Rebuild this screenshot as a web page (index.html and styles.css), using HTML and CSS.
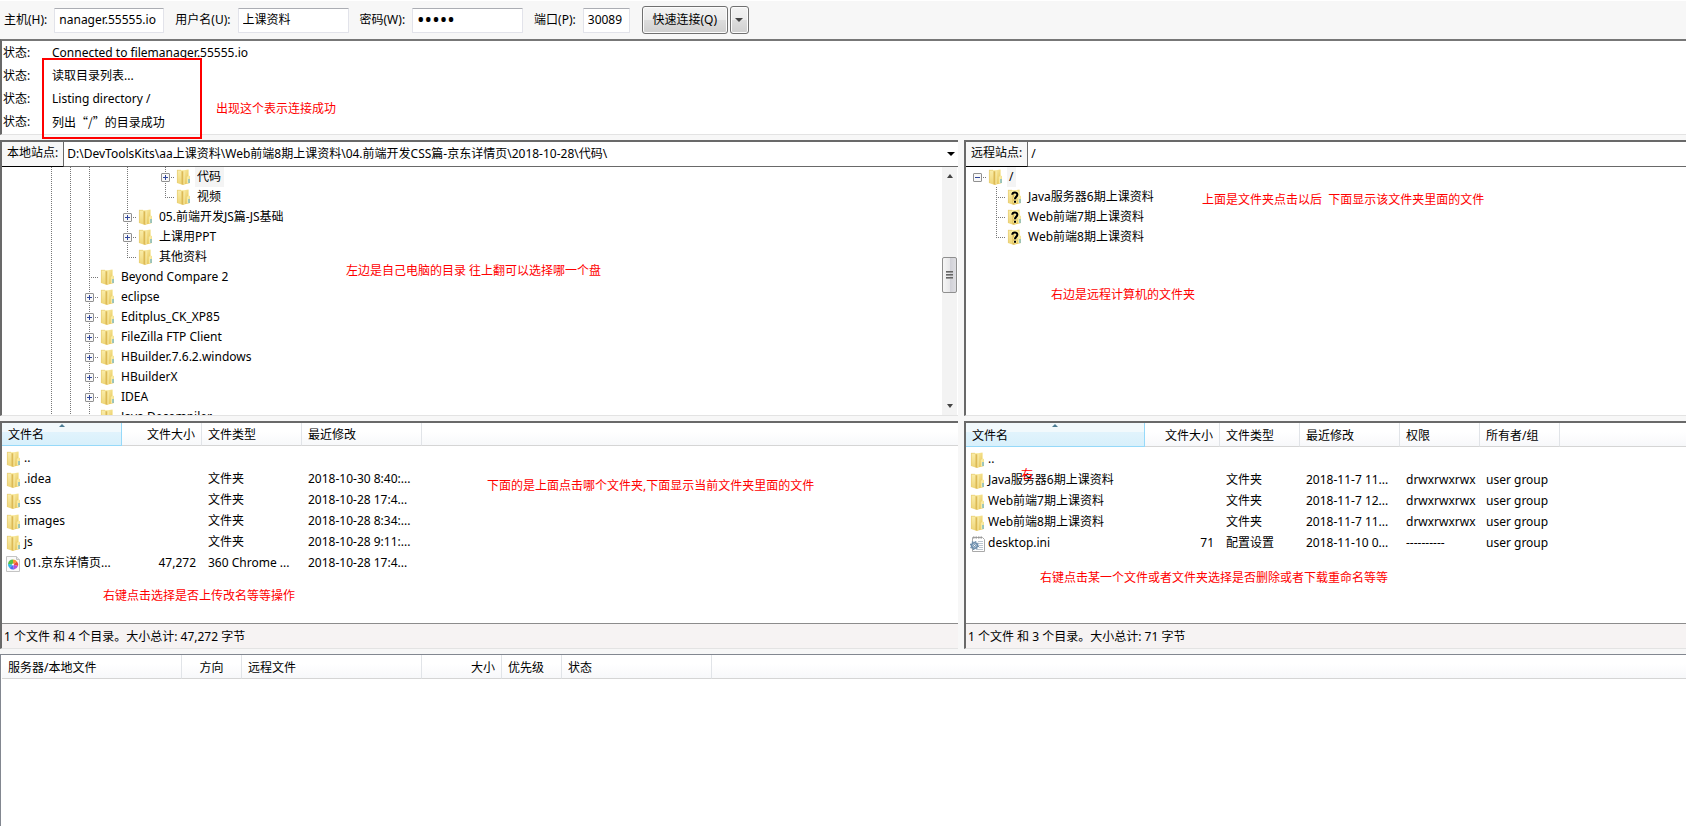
FILE: index.html
```html
<!DOCTYPE html>
<html lang="zh-CN">
<head>
<meta charset="utf-8">
<title>FileZilla</title>
<link rel="stylesheet" href="styles.css">
</head>
<body>
<svg class="defs" aria-hidden="true">
  <defs>
    <linearGradient id="gold" x1="0" x2="0" y1="0" y2="1">
      <stop offset="0" stop-color="#faedaa"/><stop offset="1" stop-color="#eed578"/>
    </linearGradient>
    <linearGradient id="gold-front" x1="0" x2="1" y1="0" y2="1">
      <stop offset="0" stop-color="#fdf2b0"/><stop offset="1" stop-color="#e0b941"/>
    </linearGradient>
    <symbol id="folder" viewBox="0 0 16 16">
      <path d="M1 1h6.500l.5.500V15.500H5.500L1 14z" fill="url(#gold)"/>
      <path d="M6 1.500 12.500.5v6L14 7.200v6.800l-6 1.500-2-.5z" fill="url(#gold-front)"/>
      <path d="M12 1v6l-1.200 1v6.500l3-.8V7.200l-1.300-.9V1z" fill="#f8eaa2"/>
      <path d="M5.500 2 7.500 2.500V16l-2-.7z" fill="#dcb955"/>
      <path d="M8 2.500V15.500" stroke="#fbf0b4" stroke-width=".8"/>
      <path d="M1.400 1.200v12.800M1 1.300h4" stroke="#e6cb72" stroke-width=".7"/>
      <path d="M13 10v4" stroke="#47a5dc"/>
    </symbol>
    <symbol id="folder-unknown" viewBox="0 0 16 16">
      <use href="#folder"/>
      <path d="M5.300 5.800C5.400 2.500 10.600 2.500 10.500 5.700 10.500 7.700 8 8 8 10.300M8 11.700v2.100" fill="none" stroke="#fff3a0" stroke-width="4"/>
      <path d="M5.300 5.800C5.400 2.700 10.400 2.700 10.300 5.700 10.300 7.700 8 8 8 10.300M8 11.700v2.100" fill="none" stroke="#000" stroke-width="2.100"/>
    </symbol>
    <symbol id="page-html" viewBox="0 0 16 16">
      <path d="M.5.500h10l3 3v12H.5z" fill="#fafafa" stroke="#c4c4c4"/>
      <path d="M10.500.5v3h3" fill="#e8e8e8" stroke="#c4c4c4"/>
      <path d="M7 8.500V3.500a5 5 0 0 1 4 2z" fill="#f39a2d"/><path d="M7 8.500 11 5.500a5 5 0 0 1 1 4.500z" fill="#e94b3c"/>
      <path d="M7 8.500 12 10a5 5 0 0 1-4 3.500z" fill="#b54fd6"/><path d="M7 8.500 8 13.500a5 5 0 0 1-4.500-1.500z" fill="#4a6ff0"/>
      <path d="M7 8.500 3.500 12A5 5 0 0 1 2 8z" fill="#29b6e8"/><path d="M7 8.500 2 8a5 5 0 0 1 5-4.500z" fill="#55c04a"/>
      <circle cx="7" cy="8.500" r="1" fill="#fff"/>
    </symbol>
    <symbol id="page-ini" viewBox="0 0 16 16">
      <path d="M2.500 1.500h10l2 2v12h-12z" fill="#fff" stroke="#a9a9a9"/>
      <path d="M3 1.500h10" stroke="#999" stroke-dasharray="1.500 1" stroke-width="2"/>
      <path d="M8 5.500h5M9 7.500h4M9 9.500h4M9 11.500h4M7 13.500h6" stroke="#bcc5cf"/>
      <circle cx="4.500" cy="9.500" r="2.800" fill="#dcebf7" stroke="#6d8dab" stroke-width="1.600"/>
      <circle cx="4.500" cy="9.500" r="4" fill="none" stroke="#6d8dab" stroke-width="1.200" stroke-dasharray="1.600 1.500"/>
      <circle cx="4.500" cy="9.500" r="1" fill="#fff" stroke="#4e6f90" stroke-width=".8"/>
    </symbol>
  </defs>
</svg>

<form class="toolbar">
  <label for="host">主机(H):</label><input class="field host" id="host" type="text" value="nanager.55555.io">
  <label for="user">用户名(U):</label><input class="field" id="user" type="text" value="上课资料">
  <label for="pass">密码(W):</label><input class="field pass" id="pass" type="password" value="12345">
  <label for="port">端口(P):</label><input class="field port" id="port" type="text" value="30089">
  <button class="btn connect" type="button">快速连接(Q)</button>
  <button class="btn more" type="button" aria-label="历史记录"><span class="arrow"></span></button>
</form>

<section class="log">
  <div class="log-row"><span>状态:</span><span>Connected to filemanager.55555.io</span></div>
  <div class="log-row"><span>状态:</span><span>读取目录列表...</span></div>
  <div class="log-row"><span>状态:</span><span>Listing directory /</span></div>
  <div class="log-row"><span>状态:</span><span class="cjk">列出“/”的目录成功</span></div>
  <div class="mark"></div>
  <p class="note n-log">出现这个表示连接成功</p>
</section>

<main class="split">
  <section class="pane site">
    <div class="address">
      <label for="local">本地站点:</label>
      <select id="local"><option>D:\DevToolsKits\aa上课资料\Web前端8期上课资料\04.前端开发CSS篇-京东详情页\2018-10-28\代码\</option></select>
      <span class="arrow black"></span>
    </div>
    <div class="tree-wrap">
      <ul class="tree local">
        <li><i class="v"></i><i class="v"></i><i class="v"></i><i></i><i class="v"></i><i></i><i class="v h box"></i><svg><use href="#folder"/></svg><span class="current">代码</span></li>
        <li><i class="v"></i><i class="v"></i><i class="v"></i><i></i><i class="v"></i><i></i><i class="v h end"></i><svg><use href="#folder"/></svg><span>视频</span></li>
        <li><i class="v"></i><i class="v"></i><i class="v"></i><i></i><i class="v h box"></i><svg><use href="#folder"/></svg><span>05.前端开发JS篇-JS基础</span></li>
        <li><i class="v"></i><i class="v"></i><i class="v"></i><i></i><i class="v h box"></i><svg><use href="#folder"/></svg><span>上课用PPT</span></li>
        <li><i class="v"></i><i class="v"></i><i class="v"></i><i></i><i class="v h end"></i><svg><use href="#folder"/></svg><span>其他资料</span></li>
        <li><i class="v"></i><i class="v"></i><i class="v h"></i><svg><use href="#folder"/></svg><span>Beyond Compare 2</span></li>
        <li><i class="v"></i><i class="v"></i><i class="v h box"></i><svg><use href="#folder"/></svg><span>eclipse</span></li>
        <li><i class="v"></i><i class="v"></i><i class="v h box"></i><svg><use href="#folder"/></svg><span>Editplus_CK_XP85</span></li>
        <li><i class="v"></i><i class="v"></i><i class="v h box"></i><svg><use href="#folder"/></svg><span>FileZilla FTP Client</span></li>
        <li><i class="v"></i><i class="v"></i><i class="v h box"></i><svg><use href="#folder"/></svg><span>HBuilder.7.6.2.windows</span></li>
        <li><i class="v"></i><i class="v"></i><i class="v h box"></i><svg><use href="#folder"/></svg><span>HBuilderX</span></li>
        <li><i class="v"></i><i class="v"></i><i class="v h box"></i><svg><use href="#folder"/></svg><span>IDEA</span></li>
        <li><i class="v"></i><i class="v"></i><i class="v h"></i><svg><use href="#folder"/></svg><span>Java Decompiler</span></li>
      </ul>
      <div class="scrollbar"><span class="arrow up"></span><span class="thumb"></span><span class="arrow"></span></div>
    </div>
    <p class="note n-local">左边是自己电脑的目录 往上翻可以选择哪一个盘</p>
  </section>

  <section class="pane site">
    <div class="address">
      <label for="remote">远程站点:</label>
      <select id="remote"><option>/</option></select>
    </div>
    <div class="tree-wrap">
      <ul class="tree">
        <li><i class="h box open"></i><svg><use href="#folder"/></svg><span class="current">/</span></li>
        <li><i></i><i class="v h"></i><svg><use href="#folder-unknown"/></svg><span>Java服务器6期上课资料</span></li>
        <li><i></i><i class="v h"></i><svg><use href="#folder-unknown"/></svg><span>Web前端7期上课资料</span></li>
        <li><i></i><i class="v h end"></i><svg><use href="#folder-unknown"/></svg><span>Web前端8期上课资料</span></li>
      </ul>
    </div>
    <p class="note n-remote-a">上面是文件夹点击以后&nbsp; 下面显示该文件夹里面的文件</p>
    <p class="note n-remote-b">右边是远程计算机的文件夹</p>
  </section>

  <section class="pane files">
    <div class="list">
      <table>
        <colgroup><col class="w120"><col class="w80"><col class="w100"><col class="w120"><col></colgroup>
        <thead><tr><th class="sorted">文件名</th><th class="num">文件大小</th><th>文件类型</th><th>最近修改</th><th></th></tr></thead>
        <tbody>
          <tr><td class="name"><svg><use href="#folder"/></svg>..</td><td></td><td></td><td></td><td></td></tr>
          <tr><td class="name"><svg><use href="#folder"/></svg>.idea</td><td></td><td>文件夹</td><td>2018-10-30 8:40:...</td><td></td></tr>
          <tr><td class="name"><svg><use href="#folder"/></svg>css</td><td></td><td>文件夹</td><td>2018-10-28 17:4...</td><td></td></tr>
          <tr><td class="name"><svg><use href="#folder"/></svg>images</td><td></td><td>文件夹</td><td>2018-10-28 8:34:...</td><td></td></tr>
          <tr><td class="name"><svg><use href="#folder"/></svg>js</td><td></td><td>文件夹</td><td>2018-10-28 9:11:...</td><td></td></tr>
          <tr><td class="name"><svg><use href="#page-html"/></svg>01.京东详情页...</td><td class="num">47,272</td><td>360 Chrome ...</td><td>2018-10-28 17:4...</td><td></td></tr>
        </tbody>
      </table>
    </div>
    <footer class="summary">1 个文件 和 4 个目录。大小总计: 47,272 字节</footer>
    <p class="note n-files-a">下面的是上面点击哪个文件夹,下面显示当前文件夹里面的文件</p>
    <p class="note n-files-b">右键点击选择是否上传改名等等操作</p>
  </section>

  <section class="pane files remote">
    <div class="list">
      <table>
        <colgroup><col class="w179"><col class="w75"><col class="w80"><col class="w100"><col class="w80"><col class="w80"><col></colgroup>
        <thead><tr><th class="sorted">文件名</th><th class="num">文件大小</th><th>文件类型</th><th>最近修改</th><th>权限</th><th>所有者/组</th><th></th></tr></thead>
        <tbody>
          <tr><td class="name"><svg><use href="#folder"/></svg>..</td><td></td><td></td><td></td><td></td><td></td><td></td></tr>
          <tr><td class="name"><svg><use href="#folder"/></svg>Java服务器6期上课资料</td><td></td><td>文件夹</td><td>2018-11-7 11...</td><td>drwxrwxrwx</td><td>user group</td><td></td></tr>
          <tr><td class="name"><svg><use href="#folder"/></svg>Web前端7期上课资料</td><td></td><td>文件夹</td><td>2018-11-7 12...</td><td>drwxrwxrwx</td><td>user group</td><td></td></tr>
          <tr><td class="name"><svg><use href="#folder"/></svg>Web前端8期上课资料</td><td></td><td>文件夹</td><td>2018-11-7 11...</td><td>drwxrwxrwx</td><td>user group</td><td></td></tr>
          <tr><td class="name"><svg><use href="#page-ini"/></svg>desktop.ini</td><td class="num">71</td><td>配置设置</td><td>2018-11-10 0...</td><td>----------</td><td>user group</td><td></td></tr>
        </tbody>
      </table>
    </div>
    <footer class="summary">1 个文件 和 3 个目录。大小总计: 71 字节</footer>
    <p class="note n-right">右</p>
    <p class="note n-files-c">右键点击某一个文件或者文件夹选择是否删除或者下载重命名等等</p>
  </section>
</main>

<section class="queue">
  <table>
    <colgroup><col class="w180"><col class="w60"><col class="w180"><col class="w80"><col class="w60"><col class="w150"><col></colgroup>
    <thead><tr><th>服务器/本地文件</th><th class="mid">方向</th><th>远程文件</th><th class="num">大小</th><th>优先级</th><th>状态</th><th></th></tr></thead>
  </table>
</section>
</body>
</html>
```

FILE: styles.css
```css
*, *::before, *::after { box-sizing: border-box; }

body {
  margin: 0;
  min-height: 100vh;
  display: flex;
  flex-direction: column;
  background: #f7f7f7;
  color: #000;
  font: 12px/20px "Noto Sans", "Noto Sans CJK SC", sans-serif;
  white-space: nowrap;
  overflow: hidden;
}

input, select, button { font: inherit; color: inherit; }
p, ul { margin: 0; padding: 0; }
.defs { position: absolute; width: 0; height: 0; }
.cjk { font-family: "Noto Sans CJK SC", sans-serif; }

.arrow {
  width: 0;
  height: 0;
  border: 4px solid transparent;
  border-top-color: #444;
  border-bottom: 0;
}
.arrow.up { border-top: 0; border-bottom: 4px solid #444; }
.arrow.black { border-top-color: #000; }

/* quick connect bar */
.toolbar {
  display: flex;
  align-items: center;
  height: 39px;
  padding: 0 4px;
  border-top: 1px solid #fff;
}
.toolbar label { margin-right: 7px; }
.field {
  width: 111px;
  height: 25px;
  margin-right: 11px;
  padding: 0 4px 2px;
  border: 1px solid #e2e3ea;
  border-top-color: #abadb3;
  border-radius: 1px;
  background: #fff;
  outline: 0;
}
.field.host { width: 110px; }
.field.pass { font-size: 20px; }
.field.port { width: 47px; margin-right: 12px; }
.btn {
  height: 28px;
  padding: 0;
  border: 1px solid #707070;
  border-radius: 3px;
  background: linear-gradient(#f3f3f3, #ebebeb 50%, #dddddd 50%, #cfcfcf);
  box-shadow: inset 0 0 0 1px #fcfcfc;
}
.connect { width: 86px; margin-right: 2px; }
.more { width: 19px; display: flex; align-items: center; justify-content: center; }

/* message log */
.log {
  position: relative;
  height: 96px;
  padding: 0 1px;
  border: solid #696969;
  border-width: 2px 0 1px 2px;
  border-top-color: #777;
  border-bottom-color: #e3e3e3;
  background: #fff;
}
.log-row { display: grid; grid-template-columns: 49px 1fr; line-height: 23px; }
.mark {
  position: absolute;
  left: 40px;
  top: 17px;
  width: 160px;
  height: 81px;
  border: 2px solid #f00;
  z-index: 1;
}
.note { position: absolute; color: #f00; }
.n-log { left: 214px; top: 58px; }

/* panes */
.split {
  display: grid;
  grid-template-columns: 958fr 722fr;
  gap: 5px 6px;
  padding: 5px 0;
}
.pane {
  position: relative;
  min-width: 0;
  border: solid #696969;
  border-width: 2px 0 1px 2px;
  border-bottom-color: #e3e3e3;
  background: #fff;
}
.address { display: flex; align-items: center; height: 25px; border-bottom: 1px solid #696969; }
.address label {
  height: 25px;
  padding: 1px 5px 0;
  margin-bottom: -1px;
  border-right: 1px solid #696969;
  border-bottom: 1px solid #000;
  background: #f7f7f7;
}
.address select {
  flex: 1;
  min-width: 0;
  height: 23px;
  padding: 0 3px;
  appearance: none;
  border: 0;
  background: #fff;
}
.address .arrow { margin-right: 3px; }

.tree-wrap { display: flex; height: 248px; overflow: hidden; }
.tree { flex: 1; padding-left: 2px; list-style: none; }
.tree.local { padding-left: 40px; }
.tree li { display: flex; align-items: center; height: 20px; }
.tree svg { width: 16px; height: 16px; margin: 0 3px 0 1px; }
.tree span { padding: 0 2px; }
.tree .current { background: #f4f4f4; padding-right: 3px; }
.tree i { position: relative; width: 19px; height: 20px; }
.tree .v {
  background: repeating-linear-gradient(#777 0 1px, transparent 1px 2px) 9px 0 / 1px 100% no-repeat;
}
.tree .v.end { background-size: 1px 11px; }
.tree .h::before {
  content: "";
  position: absolute;
  left: 9px;
  right: 0;
  top: 10px;
  height: 1px;
  background: repeating-linear-gradient(90deg, #777 0 1px, transparent 1px 2px);
}
.tree .box::after {
  content: "";
  position: absolute;
  left: 5px;
  top: 6px;
  width: 9px;
  height: 9px;
  border: 1px solid #919191;
  border-radius: 1px;
  background:
    linear-gradient(#31479b, #31479b) 1px 3px / 5px 1px no-repeat,
    linear-gradient(#31479b, #31479b) 3px 1px / 1px 5px no-repeat,
    #f8f8f8;
}
.tree .box.open::after {
  background: linear-gradient(#31479b, #31479b) 1px 3px / 5px 1px no-repeat, #f8f8f8;
}

.scrollbar {
  width: 15px;
  margin-right: 1px;
  padding: 7px 0;
  display: grid;
  grid-template-rows: auto 1fr auto;
  justify-items: center;
  background: #f3f3f3;
}
.scrollbar .arrow { border-left-width: 3px; border-right-width: 3px; }
.thumb {
  width: 15px;
  height: 36px;
  margin-top: 79px;
  border: 1px solid #8f8f8f;
  border-radius: 2px;
  background:
    repeating-linear-gradient(#666 0 1px, #999 1px 2px, transparent 2px 3px) center / 7px 8px no-repeat,
    linear-gradient(90deg, #f6f6f6, #e8e8ea 50%, #cfcfd6 50%, #dedee2);
}

.n-local { left: 344px; top: 119px; }
.n-remote-a { left: 236px; top: 48px; }
.n-remote-b { left: 85px; top: 143px; }

/* file lists */
.files { display: flex; flex-direction: column; }
.list { height: 200px; }
table { width: 100%; table-layout: fixed; border-collapse: separate; border-spacing: 0; }
th, td { padding: 2px 6px 0; text-align: left; font-weight: normal; overflow: hidden; }
th {
  height: 23px;
  border-right: 1px solid #e1e4e8;
  border-bottom: 1px solid #d5d5d5;
  background: linear-gradient(#fff 40%, #f7f8fa);
}
th:last-child { border-right: 0; }
th.sorted {
  position: relative;
  border-color: #96d9f9;
  background: linear-gradient(#f2f9fc 40%, #e1f3fc 40%, #d8f0fb);
}
th.sorted::after {
  content: "";
  position: absolute;
  left: 50%;
  top: 1px;
  margin-left: -3px;
  border: 3px solid transparent;
  border-top: 0;
  border-bottom-color: #4c7c93;
}
td { height: 21px; line-height: 19px; }
.num { text-align: right; }
.mid { text-align: center; }
.name { padding-left: 4px; padding-right: 0; }
.name svg { width: 16px; height: 16px; margin: -2px 2px -2px 0; vertical-align: -3px; }
.remote th { height: 24px; }
.summary {
  height: 25px;
  padding: 3px 2px 0;
  border-top: 1px solid #8c8c8c;
  background: #f6f3f3;
}
.n-files-a { left: 485px; top: 53px; }
.n-files-b { left: 101px; top: 163px; }
.n-right { left: 55px; top: 42px; }
.n-files-c { left: 74px; top: 145px; }

.w60 { width: 60px; }
.w75 { width: 75px; }
.w80 { width: 80px; }
.w100 { width: 100px; }
.w120 { width: 120px; }
.w150 { width: 150px; }
.w179 { width: 179px; }
.w180 { width: 180px; }

/* transfer queue */
.queue {
  flex: 1;
  padding-left: 1px;
  border: solid #828790;
  border-width: 1px 0 0 1px;
  background: #fff;
}
.queue th { height: 24px; }
```
